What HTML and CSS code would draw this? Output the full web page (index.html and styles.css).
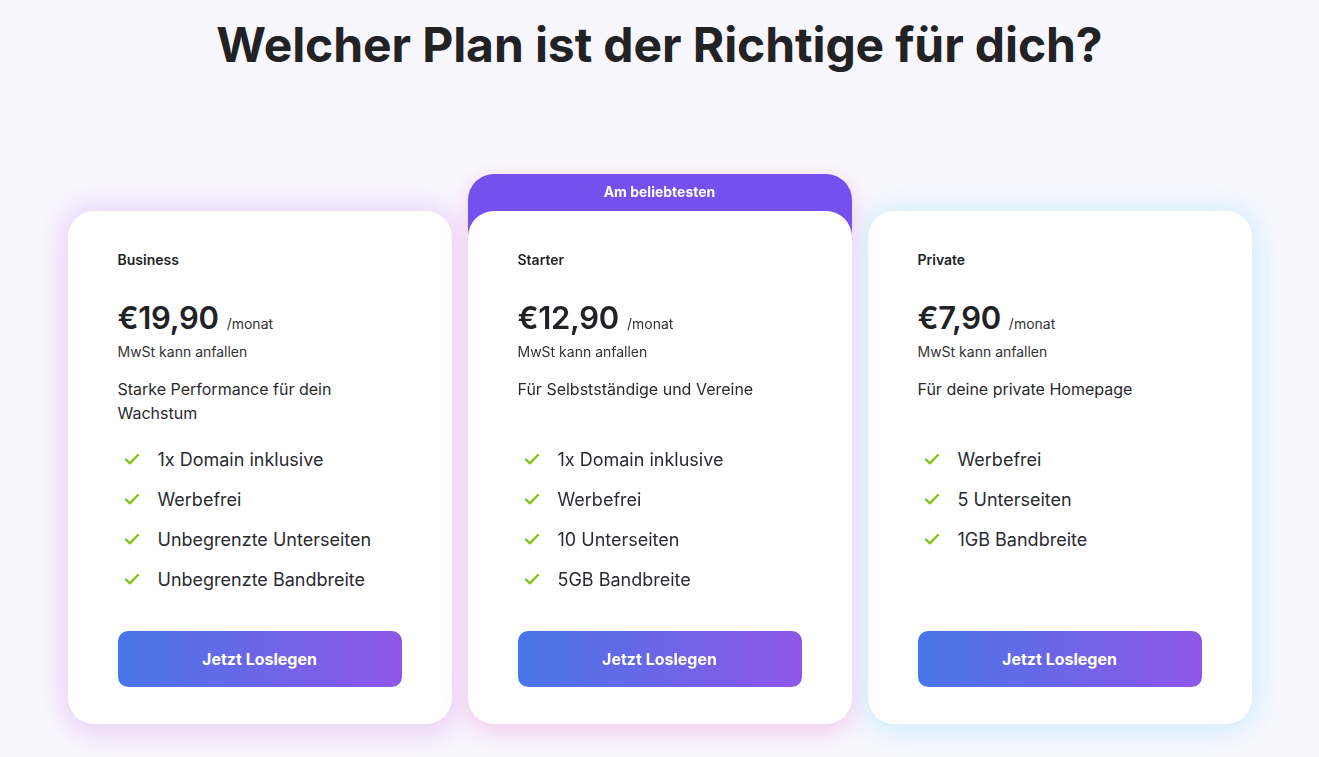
FILE: index.html
```html
<!DOCTYPE html>
<html lang="de">
<head>
<meta charset="utf-8">
<link rel="stylesheet" href="styles.css">
</head>
<body>
<main class="page">
  <h1 class="title">Welcher Plan ist der Richtige für dich?</h1>
  <div class="plans">
    <div class="plan plan-business">
      <div class="card">
        <div class="name">Business</div>
        <div class="price-row"><span class="price">€19,90</span><span class="per">/monat</span></div>
        <div class="tax">MwSt kann anfallen</div>
        <p class="desc">Starke Performance für dein Wachstum</p>
        <ul class="features">
          <li><svg class="check" viewBox="0 0 16 16"><path d="M2 8.5l3.8 3.8L14 4" /></svg>1x Domain inklusive</li>
          <li><svg class="check" viewBox="0 0 16 16"><path d="M2 8.5l3.8 3.8L14 4" /></svg>Werbefrei</li>
          <li><svg class="check" viewBox="0 0 16 16"><path d="M2 8.5l3.8 3.8L14 4" /></svg>Unbegrenzte Unterseiten</li>
          <li><svg class="check" viewBox="0 0 16 16"><path d="M2 8.5l3.8 3.8L14 4" /></svg>Unbegrenzte Bandbreite</li>
        </ul>
        <button class="cta">Jetzt Loslegen</button>
      </div>
    </div>
    <div class="plan plan-starter">
      <div class="badge">Am beliebtesten</div>
      <div class="card">
        <div class="name">Starter</div>
        <div class="price-row"><span class="price">€12,90</span><span class="per">/monat</span></div>
        <div class="tax">MwSt kann anfallen</div>
        <p class="desc">Für Selbstständige und Vereine</p>
        <ul class="features">
          <li><svg class="check" viewBox="0 0 16 16"><path d="M2 8.5l3.8 3.8L14 4" /></svg>1x Domain inklusive</li>
          <li><svg class="check" viewBox="0 0 16 16"><path d="M2 8.5l3.8 3.8L14 4" /></svg>Werbefrei</li>
          <li><svg class="check" viewBox="0 0 16 16"><path d="M2 8.5l3.8 3.8L14 4" /></svg>10 Unterseiten</li>
          <li><svg class="check" viewBox="0 0 16 16"><path d="M2 8.5l3.8 3.8L14 4" /></svg>5GB Bandbreite</li>
        </ul>
        <button class="cta">Jetzt Loslegen</button>
      </div>
    </div>
    <div class="plan plan-private">
      <div class="card">
        <div class="name">Private</div>
        <div class="price-row"><span class="price">€7,90</span><span class="per">/monat</span></div>
        <div class="tax">MwSt kann anfallen</div>
        <p class="desc">Für deine private Homepage</p>
        <ul class="features">
          <li><svg class="check" viewBox="0 0 16 16"><path d="M2 8.5l3.8 3.8L14 4" /></svg>Werbefrei</li>
          <li><svg class="check" viewBox="0 0 16 16"><path d="M2 8.5l3.8 3.8L14 4" /></svg>5 Unterseiten</li>
          <li><svg class="check" viewBox="0 0 16 16"><path d="M2 8.5l3.8 3.8L14 4" /></svg>1GB Bandbreite</li>
        </ul>
        <button class="cta">Jetzt Loslegen</button>
      </div>
    </div>
  </div>
</main>
</body>
</html>
```
FILE: styles.css
```css
* { box-sizing: border-box; }
html, body { margin: 0; padding: 0; }
body {
  background: #f8f7fe;
  font-family: Inter, "Noto Sans", sans-serif;
  color: #222226;
  width: 1319px;
  height: 757px;
  overflow: hidden;
}
.page {
  display: flex;
  flex-direction: column;
  align-items: center;
}
.title {
  margin: 16px 0 0;
  font-size: 48px;
  font-weight: 700;
  line-height: 58px;
  color: #222224;
  letter-spacing: -0.1px;
}
.plans {
  display: flex;
  gap: 16px;
  margin-top: 100px;
}
.plan {
  width: 384px;
  display: flex;
  flex-direction: column;
}
.plan-business, .plan-private { padding-top: 37px; }
.plan-starter {
  filter: drop-shadow(0 8px 12px rgba(240, 188, 232, 0.75));
}
.badge {
  height: 62px;
  margin-bottom: -25px;
  background: #7450ee;
  color: #fff;
  border-radius: 26px 26px 0 0;
  font-size: 14px;
  font-weight: 700;
  text-align: center;
  padding-top: 10px;
  line-height: 16px;
}
.card {
  background: #fff;
  border-radius: 26px;
  height: 513px;
  padding: 41px 50px 0;
  display: flex;
  flex-direction: column;
}
.plan-business .card {
  box-shadow: -4px -4px 24px 4px rgba(232, 212, 250, 0.7), 4px 8px 26px 4px rgba(238, 196, 240, 0.6);
}
.plan-private .card {
  box-shadow: 0 2px 26px 6px rgba(200, 236, 253, 0.8);
}
.name {
  font-size: 14px;
  font-weight: 600;
  line-height: 16px;
}
.price-row {
  margin-top: 30px;
  display: flex;
  align-items: baseline;
  height: 40px;
}
.price {
  font-size: 31px;
  font-weight: 600;
  line-height: 40px;
  letter-spacing: -0.3px;
}
.per {
  font-size: 14px;
  margin-left: 8px;
  color: #333;
}
.tax {
  font-size: 14px;
  line-height: 18px;
  margin-top: 5px;
  color: #333;
}
.desc {
  margin: 16px 0 0;
  font-size: 16px;
  line-height: 24px;
  height: 48px;
  width: 250px;
  color: #2a2a2e;
}
.features {
  list-style: none;
  margin: 14px 0 0;
  padding: 0;
  height: 160px;
}
.features li {
  display: flex;
  align-items: center;
  height: 40px;
  font-size: 18px;
  color: #2a2a30;
}
.check {
  width: 16px;
  height: 16px;
  margin-left: 6px;
  margin-right: 18px;
  fill: none;
  stroke: #7ac41c;
  stroke-width: 2.4;
  stroke-linecap: round;
  stroke-linejoin: round;
}
.cta {
  margin-top: 32px;
  height: 56px;
  width: 284px;
  border: none;
  border-radius: 10px;
  background: linear-gradient(90deg, #4876e6 0%, #8f56e8 100%);
  color: #fff;
  font-family: Inter, sans-serif;
  font-size: 16px;
  font-weight: 700;
}
```
